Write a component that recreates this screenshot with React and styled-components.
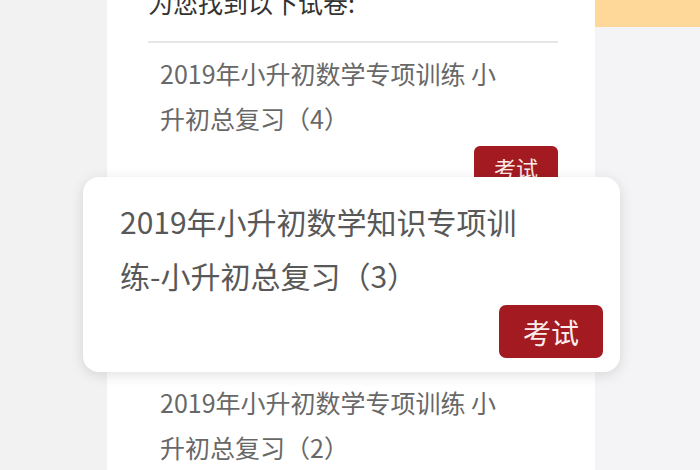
import React from "react";
import styled, { createGlobalStyle } from "styled-components";

const Global = createGlobalStyle`
  html, body { margin: 0; padding: 0; background: #f4f3f4; }
  body { font-family: "Noto Sans CJK SC", "Noto Sans", sans-serif; }
`;

const Page = styled.div`
  position: relative;
  width: 700px;
  height: 470px;
  overflow: hidden;
  display: flex;
  background: #f4f3f4;
`;

const Gutter = styled.div`
  width: 107px;
  flex: none;
  background: #f3f2f3;
`;

const Sheet = styled.div`
  width: 488px;
  flex: none;
  background: #ffffff;
  padding: 0 37px 0 41px;
  box-sizing: border-box;
`;

const Side = styled.div`
  flex: 1;
  display: flex;
  flex-direction: column;
  background: #f4f3f5;
`;

const SideBanner = styled.div`
  height: 27px;
  background: #fed899;
`;

const Intro = styled.div`
  margin-top: -13px;
  font-size: 25px;
  line-height: 30px;
  color: #333;
  height: 30px;
`;

const Divider = styled.div`
  margin-top: 24px;
  height: 2px;
  background: #e6e6e6;
`;

const Item = styled.div`
  padding: 8px 0 19.5px;
`;

const Title = styled.div`
  padding-left: 12px;
  font-size: 25px;
  line-height: 45px;
  color: #686868;
  white-space: nowrap;
`;

const Actions = styled.div`
  display: flex;
  justify-content: flex-end;
  margin-top: ${(p) => p.$gap}px;
`;

const ExamButton = styled.button`
  width: ${(p) => (p.$big ? 104 : 84)}px;
  height: ${(p) => (p.$big ? 53 : 42)}px;
  border: none;
  border-radius: ${(p) => (p.$big ? 7 : 6)}px;
  background: #a31b21;
  color: #fbecec;
  font-family: "Noto Sans CJK SC", sans-serif;
  font-size: ${(p) => (p.$big ? 28 : 22)}px;
  padding: 0;
  display: flex;
  align-items: center;
  justify-content: center;
  cursor: pointer;
`;

const Spotlight = styled.div`
  position: absolute;
  left: 83px;
  top: 177px;
  width: 537px;
  height: 195px;
  box-sizing: border-box;
  background: #ffffff;
  border-radius: 16px;
  box-shadow: 0 3px 14px rgba(0, 0, 0, 0.12);
  padding: 17px 17px 14px 37px;
  display: flex;
  flex-direction: column;
`;

const SpotTitle = styled.div`
  font-size: 30px;
  line-height: 54px;
  color: #585858;
  white-space: nowrap;
`;

const items = [
  ["2019年小升初数学专项训练 小", "升初总复习（4）"],
  ["2019年小升初数学知识专项训", "练-小升初总复习（3）"],
  ["2019年小升初数学专项训练 小", "升初总复习（2）"],
];

export default function App() {
  return (
    <>
      <Global />
      <Page>
        <Gutter />
        <Sheet>
          <Intro>为您找到以下试卷:</Intro>
          <Divider />
          {items.map((t, i) => (
            <Item key={i}>
              <Title>
                {t[0]}
                <br />
                {t[1]}
              </Title>
              <Actions $gap={5}>
                <ExamButton>考试</ExamButton>
              </Actions>
            </Item>
          ))}
        </Sheet>
        <Side>
          <SideBanner />
        </Side>
        <Spotlight>
          <SpotTitle>
            2019年小升初数学知识专项训
            <br />
            练-小升初总复习（3）
          </SpotTitle>
          <Actions $gap={3}>
            <ExamButton $big>考试</ExamButton>
          </Actions>
        </Spotlight>
      </Page>
    </>
  );
}
